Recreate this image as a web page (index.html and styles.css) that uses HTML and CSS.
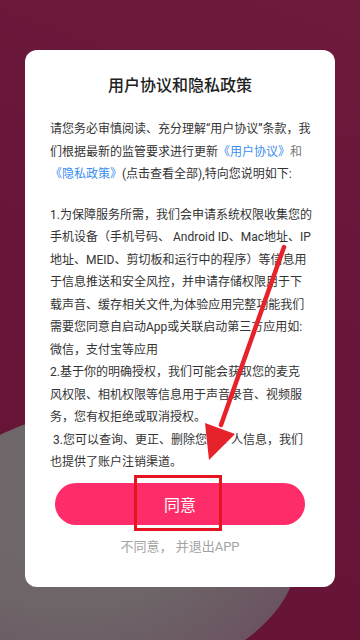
FILE: index.html
```html
<!DOCTYPE html>
<html lang="zh-CN">
<head>
<meta charset="utf-8">
<title>用户协议和隐私政策</title>
<link rel="stylesheet" href="styles.css">
</head>
<body>
<div class="screen">
  <div class="blob"></div>
  <div class="card">
    <h1 class="title">用户协议和隐私政策</h1>
    <p class="para">请您务必审慎阅读、充分理解“用户协议”条款，我<br>们根据最新的监管要求进行更新<span class="link">《用户协议》</span><span class="muted">和</span><br><span class="link">《隐私政策》</span>(点击查看全部),特向您说明如下:</p>
    <p class="para para-gap">1.为保障服务所需，我们会申请系统权限收集您的<br>手机设备（手机号码、 Android ID、Mac地址、IP<br>地址、MEID、剪切板和运行中的程序）等信息用<br>于信息推送和安全风控，并申请存储权限用于下<br>载声音、缓存相关文件,为体验应用完整功能我们<br>需要您同意自启动App或关联启动第三方应用如:<br>微信，支付宝等应用<br>2.基于你的明确授权，我们可能会获取您的麦克<br>风权限、相机权限等信息用于声音录音、视频服<br>务，您有权拒绝或取消授权。<br><span class="indent">3.您可以查询、更正、删除您的个人信息，我们</span><br>也提供了账户注销渠道。</p>
    <div class="actions">
      <div class="agree-wrap">
        <button class="agree">同意</button>
        <span class="mark"></span>
      </div>
      <div class="decline">不同意， 并退出APP</div>
    </div>
  </div>
  <svg class="arrow" width="360" height="640" viewBox="0 0 360 640">
    <line x1="284" y1="247" x2="221" y2="425" stroke="#e6222a" stroke-width="4.5" stroke-linecap="round"/>
    <polygon points="209,460 205,423 235,434" fill="#e6222a"/>
  </svg>
</div>
</body>
</html>
```

FILE: styles.css
```css
* { box-sizing: border-box; }

html, body {
  margin: 0;
  padding: 0;
}

body {
  width: 360px;
  height: 640px;
  overflow: hidden;
  font-family: Roboto, "Noto Sans CJK SC", sans-serif;
}

.screen {
  position: relative;
  width: 360px;
  height: 640px;
  padding-top: 50px;
  display: flex;
  justify-content: center;
  align-items: flex-start;
  background: linear-gradient(200deg, #6d1a3d 0%, #671538 45%, #661436 100%);
  overflow: hidden;
}

.blob {
  position: absolute;
  left: -80px;
  top: 410px;
  width: 380px;
  height: 270px;
  border-radius: 50%;
  background: radial-gradient(ellipse at 40% 30%, #716a6d 0%, #6d6568 45%, #6b5562 75%, #6a3e5c 100%);
}

.card {
  position: relative;
  width: 310px;
  background: #fff;
  border-radius: 12px;
  padding: 24px 25px 32px;
}

.title {
  margin: 0;
  font-size: 16px;
  line-height: 24px;
  font-weight: 500;
  color: #222;
  text-align: center;
}

.para {
  margin: 20px 0 0;
  font-size: 12px;
  line-height: 22.5px;
  color: #333;
  white-space: nowrap;
}

.para-gap {
  margin-top: 18px;
}

.link {
  color: #3a8ef0;
}

.muted {
  color: #777;
}

.indent {
  padding-left: 3px;
}

.actions {
  display: flex;
  flex-direction: column;
  align-items: center;
  margin-top: 9px;
}

.agree-wrap {
  position: relative;
  width: 250px;
}

.agree {
  display: block;
  width: 250px;
  height: 42px;
  border: 0;
  border-radius: 21px;
  background: #fe2c69;
  color: #fff;
  font-family: Roboto, "Noto Sans CJK SC", sans-serif;
  font-size: 16px;
  padding: 0;
}

.mark {
  position: absolute;
  left: 79px;
  top: -8px;
  width: 88px;
  height: 56px;
  border: 3px solid #e5141f;
}

.decline {
  margin-top: 14px;
  font-size: 13px;
  line-height: 16px;
  color: #a3a3a3;
}

.arrow {
  position: absolute;
  left: 0;
  top: 0;
  pointer-events: none;
}
```
